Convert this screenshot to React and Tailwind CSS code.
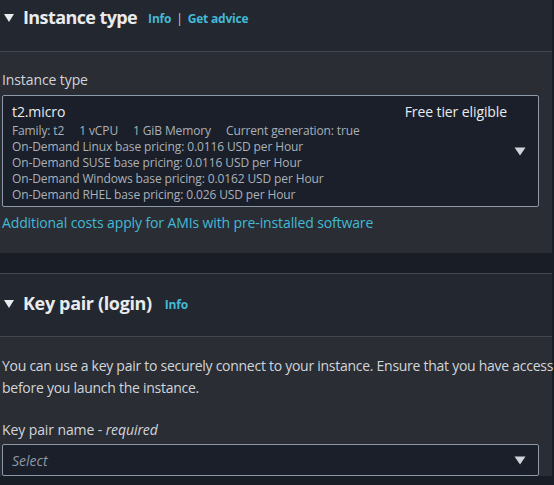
import React from 'react';

const Caret = ({ className = '' }) => (
  <svg width="12" height="10" viewBox="0 0 12 10" className={className}>
    <path d="M1 1h10L6 9z" fill="#e9ebed" />
  </svg>
);

const SmallCaret = () => (
  <svg width="12" height="9" viewBox="0 0 12 9">
    <path d="M0.5 0.5h11L6 8.5z" fill="#d1d5db" />
  </svg>
);

const pricing = [
  'On-Demand Linux base pricing: 0.0116 USD per Hour',
  'On-Demand SUSE base pricing: 0.0116 USD per Hour',
  'On-Demand Windows base pricing: 0.0162 USD per Hour',
  'On-Demand RHEL base pricing: 0.026 USD per Hour',
];

export default function App() {
  return (
    <div
      className="w-[554px] h-[485px] overflow-hidden bg-[#191d26] text-[#d1d5db]"
      style={{ fontFamily: '"Open Sans", "Noto Sans", sans-serif' }}
    >
      {/* Instance type panel */}
      <section className="bg-[#2a2d33] mr-[2px]">
        <div className="h-[52px] bg-[#23272f] border-b border-[#414750] flex items-start pt-[4px] pl-[3px]">
          <Caret className="mt-[9px]" />
          <h2 className="ml-[8px] text-[18px] font-bold text-[#e9ebed] leading-[26px] tracking-[-0.6px]">Instance type</h2>
          <div className="ml-[11px] mt-[7px] text-[12px] font-bold leading-[16px] flex items-center tracking-[-0.2px]">
            <span className="text-[#44b9d6]">Info</span>
            <span className="mx-[5px] text-[#d1d5db] font-normal">|</span>
            <span className="text-[#44b9d6]">Get advice</span>
          </div>
        </div>
        <div className="pt-[18px] pb-[20px] pl-[2px] pr-[13px]">
          <div className="text-[14px] leading-[20px] text-[#d1d5db] tracking-[-0.1px]">Instance type</div>
          <div className="mt-[5px] h-[112px] border border-[#8d99a8] rounded-[2px] bg-[#1a1f29] flex pl-[9px] pr-[12px] pt-[6px]">
            <div className="flex-1">
              <div className="flex justify-between text-[14px] leading-[20px] text-[#e9ebed] tracking-[-0.1px]">
                <span>t2.micro</span>
                <span className="mr-[7px]">Free tier eligible</span>
              </div>
              <div className="mt-[1px] text-[12px] leading-[16px] text-[#aab1ba] tracking-[-0.12px]">
                <div className="flex gap-[15px]">
                  <span>Family: t2</span>
                  <span>1 vCPU</span>
                  <span>1 GiB Memory</span>
                  <span>Current generation: true</span>
                </div>
                {pricing.map((p) => (
                  <div key={p}>{p}</div>
                ))}
              </div>
            </div>
            <div className="flex items-center -mt-[6px]">
              <SmallCaret />
            </div>
          </div>
          <div className="mt-[6px] text-[14px] leading-[20px] text-[#44b9d6] tracking-[-0.12px]">
            Additional costs apply for AMIs with pre-installed software
          </div>
        </div>
      </section>

      {/* Key pair panel */}
      <section className="mt-[20px] bg-[#2a2d33] mr-[2px] border-t border-[#414750]">
        <div className="h-[63px] bg-[#23272f] border-b border-[#414750] flex items-start pt-[16px] pl-[3px]">
          <Caret className="mt-[9px]" />
          <h2 className="ml-[8px] text-[18px] font-bold text-[#e9ebed] leading-[26px] tracking-[-0.35px]">Key pair (login)</h2>
          <span className="ml-[13px] mt-[7px] text-[12px] leading-[16px] font-bold text-[#44b9d6] tracking-[-0.2px]">Info</span>
        </div>
        <div className="pt-[18px] pl-[2px] pr-[13px]">
          <p className="text-[14px] leading-[21.5px] text-[#d1d5db] whitespace-nowrap tracking-[-0.27px]">
            You can use a key pair to securely connect to your instance. Ensure that you have access to the selected key pair
            <br />
            before you launch the instance.
          </p>
          <div className="mt-[22px] text-[14px] leading-[20px] text-[#d1d5db] tracking-[-0.1px]">
            Key pair name - <i>required</i>
          </div>
          <div className="mt-[4px] h-[32px] border border-[#8d99a8] rounded-[2px] bg-[#1a1f29] flex items-center justify-between pl-[9px] pr-[12px]">
            <span className="text-[14px] italic text-[#8d99a8]">Select</span>
            <SmallCaret />
          </div>
        </div>
      </section>
    </div>
  );
}
